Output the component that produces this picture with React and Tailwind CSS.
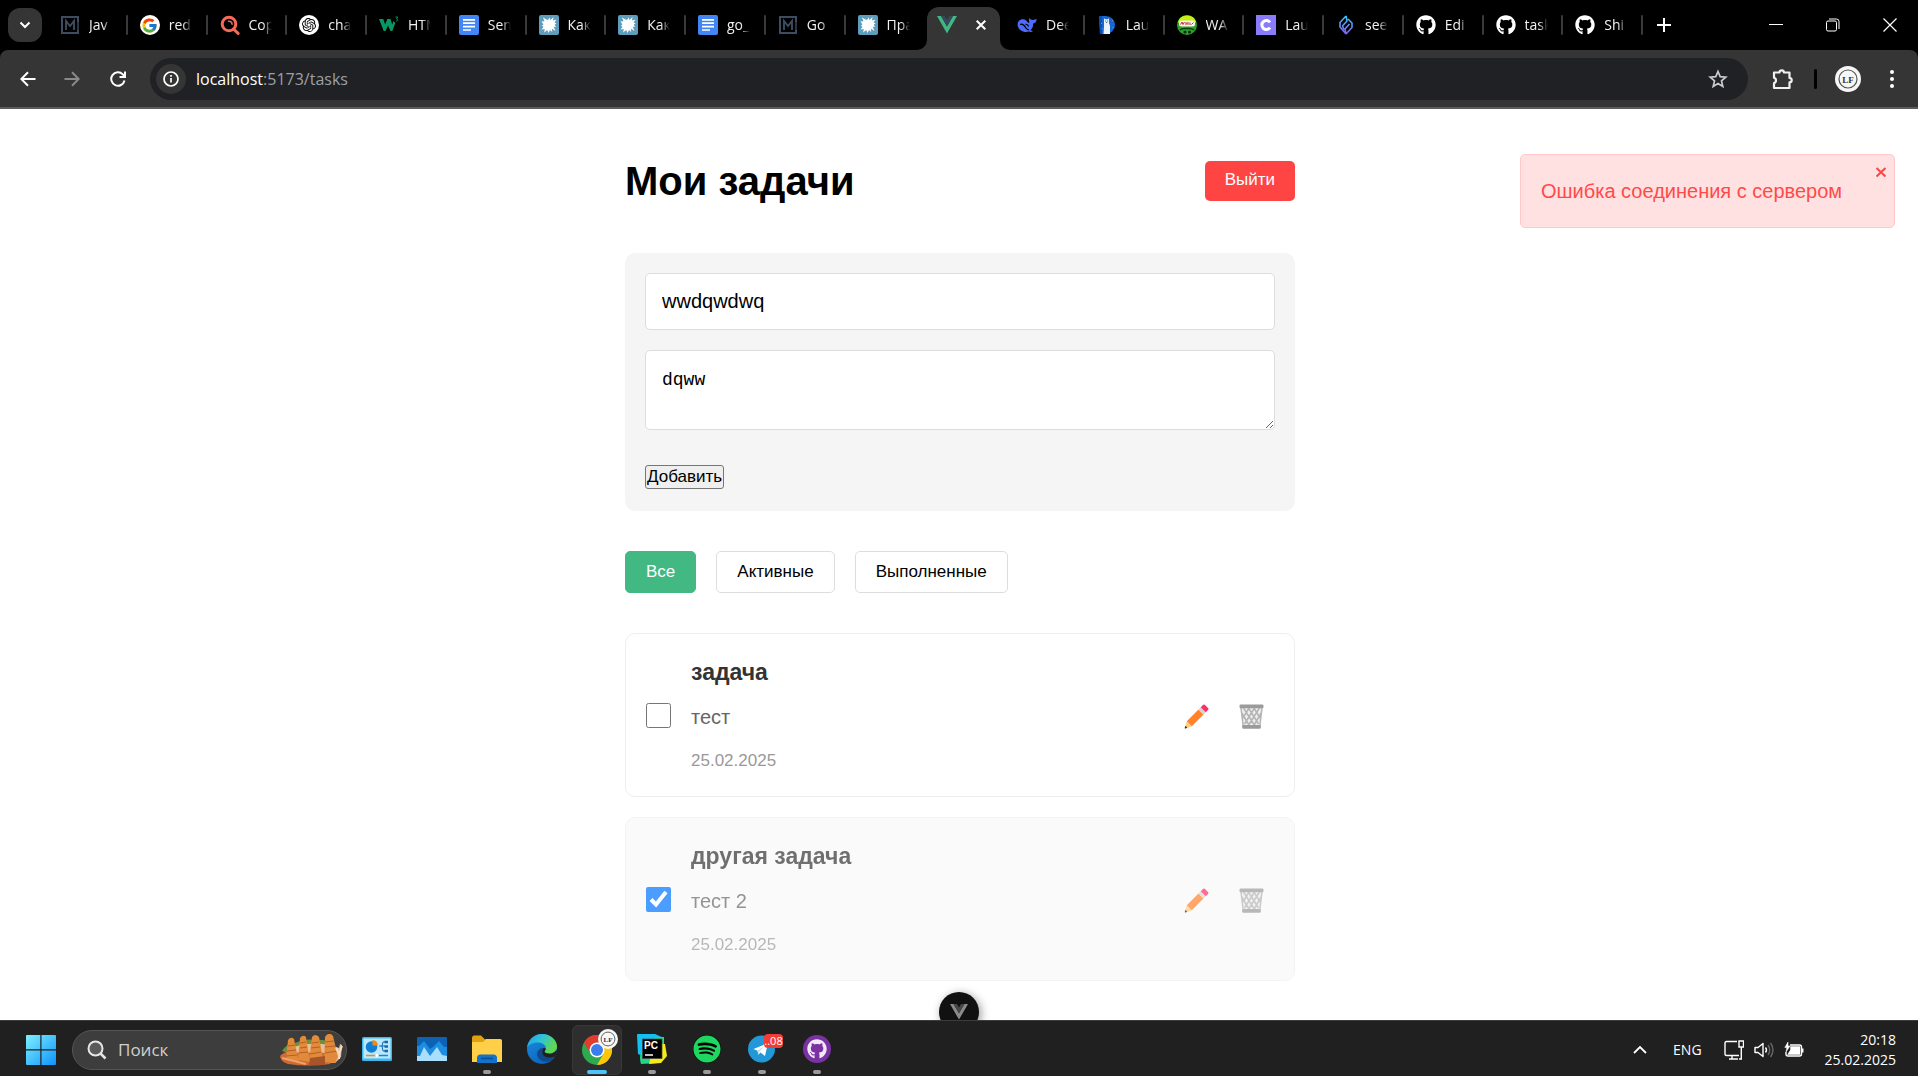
import React, { useState } from "react";
import { FaGithub, FaSpotify } from "react-icons/fa";
import { FcGoogle } from "react-icons/fc";
import { SiOpenai } from "react-icons/si";

/* ---------- tab favicons ---------- */

function MetanitIcon() {
  return (
    <svg viewBox="0 0 18 18" className="size-[18px]" fill="none" stroke="#3d4c5e">
      <path d="M17 6V1H1v16h16v-3" strokeWidth="2" />
      <path d="M5 14V5l4 5 4-5v9" strokeWidth="1.9" />
      <path d="M17 5v9" strokeWidth="1.4" />
    </svg>
  );
}

function GoogleIcon() {
  return (
    <span className="flex size-5 items-center justify-center rounded-full bg-white">
      <FcGoogle className="size-[17px]" />
    </span>
  );
}

function SearchRedIcon() {
  return (
    <svg viewBox="0 0 20 20" className="size-5" fill="none" stroke="#f26b5b" strokeLinecap="round">
      <circle cx="9" cy="9" r="6.8" strokeWidth="3" />
      <path d="M8.5 6.2a3 3 0 0 1 3.6 3" strokeWidth="1.5" />
      <path d="M13.5 14l4.6 4.4" strokeWidth="3" />
    </svg>
  );
}

function GptIcon() {
  return (
    <span className="flex size-5 items-center justify-center rounded-full bg-white">
      <SiOpenai className="size-[14px] text-black" />
    </span>
  );
}

function W3Icon() {
  return (
    <svg viewBox="0 0 20 20" className="size-5">
      <path d="M0 4h4.200l2 5.500L8.300 4h3.200l1.700 5.500L14.500 6l1.800 2-3 8h-1.800L9 10.500 6.500 16H4.700z" fill="#059862" />
      <path d="M16.500 2h2.200l-1.200 1.800c1.800 0 1.600 2.400-.4 2.200" stroke="#059862" strokeWidth="1" fill="none" />
    </svg>
  );
}

function DocsIcon() {
  return (
    <svg viewBox="0 0 20 20" className="size-5">
      <rect width="20" height="20" rx="2" fill="#4285f4" />
      <path d="M4 4.800h12M4 8.200h12M4 11.600h12M4 15h8" stroke="#fff" strokeWidth="1.700" />
    </svg>
  );
}

function SplatIcon() {
  return (
    <svg viewBox="0 0 20 20" className="size-5">
      <rect width="20" height="20" rx="2" fill="#5e9dbc" />
      <path
        d="M9 5l1.500-2.500L11.500 5l3-3-.5 3.500 3.500-1-2 3 2 .8-1.800 1.500 1.300 2.200-2.300-.2 1.800 4.200-3.500-2.300.2 3.300-2.200-2-1.500 3-1.300-3-3 2.500.5-3.500-3.200.5 2-2.500-1.500-1.500 1.500-1L2.500 6.500l3-.3L4 2.500l3 1.800z"
        fill="#fff"
      />
    </svg>
  );
}

function VueIcon() {
  return (
    <svg viewBox="0 0 20 18" className="h-[18px] w-5">
      <path d="M0 0h4l6 10.4L16 0h4L10 17.400z" fill="#41b883" />
      <path d="M4 0h3.700L10 4l2.300-4H16l-6 10.400z" fill="#35495e" />
    </svg>
  );
}

function WhaleIcon() {
  return (
    <svg viewBox="0 0 20 20" className="size-5">
      <path
        d="M.6 9.200C.8 6 3.200 4.200 6 4.200c2.700 0 3.300 1.600 5 3.400.9.900 1.300.3 1.200-.8-.1-1.400-.5-2.300.3-3.700.9 1.500 2 2 3.600 1.900 1.400 0 2.300-.8 3.600-1-.2 2.800-1.500 4.300-3.500 4.500.2 3-1 5.200-2.800 6.700 1 .4 1.900.7 2.600 1.100-1.400.9-3 .7-4.300.2-2.400.9-5.800.5-8-1.300C1.500 13.600.5 11.600.6 9.200z"
        fill="#4d6bfe"
      />
      <path d="M3 9.500c2-1 4.500 1 6 3.500 1 1.500 2 2 3 1.600" stroke="#000" strokeWidth="1.200" fill="none" />
      <path d="M8.500 9.300c1.500-.2 2.700.8 3 2.200" stroke="#000" strokeWidth="1.200" fill="none" />
    </svg>
  );
}

function BearIcon() {
  return (
    <svg viewBox="0 0 20 20" className="size-5">
      <path d="M2 1h7a9 9 0 0 1 0 18H3z" fill="#1767d2" />
      <path d="M2 1h3v18H3z" fill="#0b4fb3" />
      <path d="M7 7V3.500l1.500.8h2L12 3.500V8l1 3v8H6.500l.5-7z" fill="#eaf4ff" />
      <path d="M8.300 6h.8M10.300 6h.8M9.200 7.500h1" stroke="#234" strokeWidth=".9" />
      <path d="M15 5l.5.500M4 8l.5.500M15.500 12l.5.500M4.500 13l.5.500" stroke="#b9dcff" strokeWidth="1" />
    </svg>
  );
}

function MaskIcon() {
  return (
    <svg viewBox="0 0 20 20" className="size-5">
      <circle cx="10" cy="10" r="10" fill="#2ea32b" />
      <path d="M.6 7.500a9.800 9.800 0 0 1 18.800 0z" fill="#c7f010" />
      <rect x="2" y="5.500" width="16" height="6" rx="2.500" fill="#f6f2f0" />
      <path d="M3.500 9.500L5 7l1 2.500L7.500 7M9 10V7.500l2 2V7M13 10V7.500M14.500 9.500l2-2" stroke="#c22c33" strokeWidth="1" fill="none" />
      <path d="M3 15c2-2 4-1.500 7-1.500s5-.5 7 1.500" stroke="#0b3f0e" strokeWidth="1.600" fill="none" />
      <circle cx="8" cy="17" r="1.600" fill="#062c08" />
      <circle cx="12.500" cy="17" r="1.600" fill="#062c08" />
    </svg>
  );
}

function CodeCIcon() {
  return (
    <svg viewBox="0 0 20 20" className="size-5">
      <rect width="20" height="20" fill="#8a7bfa" />
      <path d="M14 7.300a4.500 4.500 0 1 0 0 5.400" stroke="#fff" strokeWidth="3" fill="none" />
    </svg>
  );
}

function SeeIcon() {
  return (
    <svg viewBox="0 0 20 20" className="size-5" fill="none" strokeWidth="1.600" strokeLinejoin="round">
      <defs>
        <linearGradient id="see" x1="0" y1="0" x2="0" y2="1">
          <stop offset="0" stopColor="#35c8f5" />
          <stop offset="1" stopColor="#8a5cf6" />
        </linearGradient>
      </defs>
      <path d="M10 1L4 7.500v4.500l6 7M10 1l1 5-4.500 5 1.500 3.500M10 19l6-6.500V8l-4-4M10 19l-1-5 4.500-5" stroke="url(#see)" />
    </svg>
  );
}

function GitIcon() {
  return <FaGithub className="size-5 text-white" />;
}

const TABS_LEFT = [
  ["Jav", MetanitIcon],
  ["red", GoogleIcon],
  ["Cop", SearchRedIcon],
  ["cha", GptIcon],
  ["HTM", W3Icon],
  ["Sen", DocsIcon],
  ["Как", SplatIcon],
  ["Как", SplatIcon],
  ["go_", DocsIcon],
  ["Go", MetanitIcon],
  ["Пра", SplatIcon],
];

const TABS_RIGHT = [
  ["Dee", WhaleIcon],
  ["Lau", BearIcon],
  ["WA", MaskIcon],
  ["Lau", CodeCIcon],
  ["see", SeeIcon],
  ["Edi", GitIcon],
  ["task", GitIcon],
  ["Shi", GitIcon],
];

function Tab({ label, Icon, divider = true }) {
  return (
    <button type="button" className="flex h-[34px] min-w-0 flex-1 items-center text-left">
      <span className="ml-3 flex size-5 shrink-0 items-center justify-center">
        <Icon />
      </span>
      <span className="ml-[9px] w-[23px] shrink-0 overflow-hidden whitespace-nowrap text-[14px] leading-5 text-[#f2f2f2] [mask-image:linear-gradient(to_right,#000_60%,transparent)]">
        {label}
      </span>
      <span className={divider ? "ml-auto h-5 w-[2px] rounded bg-[#3a3a3a]" : "hidden"} />
    </button>
  );
}

function TabStrip() {
  return (
    <div className="flex h-[50px] items-center bg-black pl-2">
      <button
        type="button"
        aria-label="Поиск вкладок"
        className="flex size-[34px] items-center justify-center rounded-xl bg-[#353535]"
      >
        <svg viewBox="0 0 12 12" className="size-3" fill="none" stroke="#fff" strokeWidth="2">
          <path d="M1.500 3.500L6 8l4.500-4.500" />
        </svg>
      </button>
      <div className="ml-[6px] flex max-w-[1595px] flex-1 items-center">
        {TABS_LEFT.map(([label, Icon], i) => (
          <Tab key={i} label={label} Icon={Icon} divider={i < 10} />
        ))}
        <div className="flex h-[50px] min-w-0 flex-1 items-end">
          <svg viewBox="0 0 10 10" className="-ml-2 size-[10px] shrink-0">
            <path d="M10 0v10H0A10 10 0 0 0 10 0z" fill="#353535" />
          </svg>
          <div className="flex h-[43px] flex-1 items-center justify-between rounded-t-xl bg-[#353535] pr-[14px] pb-2 pl-[10px]">
            <VueIcon />
            <button type="button" aria-label="Закрыть вкладку">
              <svg viewBox="0 0 10 10" className="size-[10px]" stroke="#fff" strokeWidth="2">
                <path d="M.7.7l8.600 8.600M9.300.7L.7 9.300" />
              </svg>
            </button>
          </div>
          <svg viewBox="0 0 10 10" className="-mr-[5px] size-[10px] shrink-0">
            <path d="M0 0v10h10A10 10 0 0 1 0 0z" fill="#353535" />
          </svg>
        </div>
        {TABS_RIGHT.map(([label, Icon], i) => (
          <Tab key={i} label={label} Icon={Icon} />
        ))}
      </div>
      <button type="button" aria-label="Новая вкладка" className="ml-[14px]">
        <svg viewBox="0 0 14 14" className="size-[14px]" stroke="#fff" strokeWidth="2">
          <path d="M7 0v14M0 7h14" />
        </svg>
      </button>
      <div className="ml-auto flex">
        <button type="button" aria-label="Свернуть" className="flex h-12 w-[57px] items-center justify-center">
          <svg viewBox="0 0 14 14" className="size-[14px]" stroke="#fff" strokeWidth="1">
            <path d="M0 6.500h14" />
          </svg>
        </button>
        <button type="button" aria-label="Развернуть" className="flex h-12 w-[57px] items-center justify-center">
          <svg viewBox="0 0 14 14" className="size-[14px]" fill="none" stroke="#fff">
            <rect x=".5" y="3" width="10" height="10" rx="1.500" />
            <path d="M3 1h7.500a2.500 2.500 0 0 1 2.500 2.500V11" />
          </svg>
        </button>
        <button type="button" aria-label="Закрыть" className="flex h-12 w-[57px] items-center justify-center">
          <svg viewBox="0 0 14 14" className="size-[14px]" stroke="#fff" strokeWidth="1.200">
            <path d="M.5.500l13 13M13.500.500l-13 13" />
          </svg>
        </button>
      </div>
    </div>
  );
}

function LfAvatar({ className }) {
  return (
    <svg viewBox="0 0 26 26" className={className}>
      <circle cx="13" cy="13" r="13" fill="#f7f7f7" />
      <circle cx="13" cy="13" r="9" fill="none" stroke="#555" strokeWidth="1.200" />
      <text x="13" y="16.500" textAnchor="middle" fontSize="9" fontWeight="700" fontFamily="Liberation Serif, serif" fill="#333">
        LF
      </text>
    </svg>
  );
}

function Toolbar() {
  return (
    <div className="bg-black">
      <div className="flex h-[59px] items-center rounded-t-lg border-b-2 border-[#5c5c5c] bg-[#353535] pr-[17px] pl-[13px]">
        <button type="button" aria-label="Назад" className="flex h-8 w-[30px] items-center justify-center">
          <svg viewBox="0 0 16 16" className="size-4" fill="none" stroke="#fff" strokeWidth="2">
            <path d="M15.500 8H1.500M8 1.300L1.300 8 8 14.700" />
          </svg>
        </button>
        <button type="button" aria-label="Вперёд" className="ml-[14px] flex h-8 w-[30px] items-center justify-center">
          <svg viewBox="0 0 16 16" className="size-4" fill="none" stroke="#8a8a8a" strokeWidth="2">
            <path d="M.5 8h14M8 1.300L14.700 8 8 14.700" />
          </svg>
        </button>
        <button type="button" aria-label="Обновить" className="ml-4 flex h-8 w-[30px] items-center justify-center">
          <svg viewBox="0 0 16 16" className="size-4" fill="none" stroke="#fff" strokeWidth="2">
            <path d="M14.500 9.500A6.700 6.700 0 1 1 12.800 3.400L14.500 5.200" />
            <path d="M15 .5v5.500H9.500" />
          </svg>
        </button>
        <div className="ml-[17px] flex h-[42px] flex-1 items-center rounded-full bg-[#202124] pr-5 pl-[6px]">
          <button
            type="button"
            aria-label="Сведения о сайте"
            className="flex size-[30px] items-center justify-center rounded-full bg-[#353535]"
          >
            <svg viewBox="0 0 16 16" className="size-4" fill="none" stroke="#fff" strokeWidth="1.700">
              <circle cx="8" cy="8" r="7" />
              <path d="M8 7v4.500M8 4v1.700" />
            </svg>
          </button>
          <span className="ml-[10px] flex-1 text-[16px] leading-6 text-[#9aa0a6]">
            <span className="text-white">localhost</span>:5173/tasks
          </span>
          <button type="button" aria-label="Добавить в закладки">
            <svg viewBox="0 0 20 20" className="size-5" fill="none" stroke="#c9cbcd" strokeWidth="1.700" strokeLinejoin="miter">
              <path d="M10 2.500l2.200 5.200 5.600.5-4.300 3.700 1.300 5.500-4.800-2.900-4.800 2.900 1.300-5.500-4.300-3.700 5.600-.5z" />
            </svg>
          </button>
        </div>
        <button type="button" aria-label="Расширения" className="ml-6">
          <svg viewBox="0 0 22 22" className="size-[22px]" fill="none" stroke="#f1f1f1" strokeWidth="2.200" strokeLinejoin="round">
            <path d="M2 4.500h5.500a2.200 2.200 0 0 1 4.400 0H17.500V10a2.200 2.200 0 0 1 0 4.400V20H2v-5a2.700 2.700 0 0 0 0-5.200z" />
          </svg>
        </button>
        <span className="ml-5 h-5 w-[3px] rounded bg-black" />
        <button type="button" aria-label="Профиль" className="ml-[18px]">
          <LfAvatar className="size-[26px]" />
        </button>
        <button type="button" aria-label="Меню" className="ml-[22px] flex w-[18px] justify-center">
          <svg viewBox="0 0 4 18" className="h-[18px] w-1" fill="#fff">
            <circle cx="2" cy="2" r="2" />
            <circle cx="2" cy="9" r="2" />
            <circle cx="2" cy="16" r="2" />
          </svg>
        </button>
      </div>
    </div>
  );
}

/* ---------- task page ---------- */

function PencilEmoji() {
  return (
    <svg viewBox="0 0 25 25" className="size-[25px]">
      <path d="M2.800 17.200l5 5L1.600 24.500q-1 .3-.8-.7z" fill="#ffce7c" />
      <path d="M1.300 21.700l2 2-1.700.8q-1 .3-.8-.7z" fill="#402a32" />
      <path d="M2.800 17.200L14.500 5.500l5 5L7.800 22.200z" fill="#ff822d" />
      <path d="M14.500 5.500l2.200-2.200 5 5-2.200 2.200z" fill="#d3d3d3" />
      <path d="M16.700 3.300L19 1q1-1 2 0l3 3q1 1 0 2l-2.300 2.300z" fill="#fc2f68" />
    </svg>
  );
}

function TrashEmoji() {
  return (
    <svg viewBox="0 0 25 25" className="size-[25px]" fill="none">
      <path d="M1.500 3h22l-2.300 20H3.800z" fill="#e2e2e2" fillOpacity=".6" />
      <path
        d="M2 4l2.200 18M23 4l-2.200 18M4.500 4l11.500 18M9.500 4l10 16M15 4l6 10M2.800 9L10.500 22M20.500 4L9 22M15.500 4L5.500 20M10 4L4 14M22.200 9L14.500 22"
        stroke="#b4b4b4"
        strokeWidth="1.500"
      />
      <rect x=".5" y=".5" width="24" height="3.700" rx="1.200" fill="#9b9b9b" />
      <rect x="3.200" y="21" width="18.600" height="3.700" rx="1.200" fill="#9b9b9b" />
    </svg>
  );
}

const TASKS = [
  { id: 1, title: "задача", text: "тест", date: "25.02.2025", done: false },
  { id: 2, title: "другая задача", text: "тест 2", date: "25.02.2025", done: true },
];

function TaskCard({ task }) {
  const [done, setDone] = useState(task.done);
  return (
    <li
      className={
        done
          ? "flex items-center gap-5 rounded-[10px] border border-[#eee] bg-[#f9f9f9] p-5 opacity-70"
          : "flex items-center gap-5 rounded-[10px] border border-[#eee] bg-white p-5"
      }
    >
      <input
        type="checkbox"
        aria-label={task.title}
        checked={done}
        onChange={(e) => setDone(e.target.checked)}
        className="size-[25px]"
      />
      <div className="flex-1">
        <h3 className="text-[23px] leading-9 font-bold text-[#333]">{task.title}</h3>
        <p className="mt-3 text-[20px] leading-[30px] text-[#666]">{task.text}</p>
        <p className="mt-[14px] text-[17px] leading-[30px] text-[#999]">{task.date}</p>
      </div>
      <div className="flex gap-[10px] pt-[3px]">
        <button type="button" aria-label="Редактировать" className="flex w-[45px] justify-center">
          <PencilEmoji />
        </button>
        <button type="button" aria-label="Удалить" className="flex w-[45px] justify-center">
          <TrashEmoji />
        </button>
      </div>
    </li>
  );
}

function TasksPage() {
  return (
    <main className="relative flex-1 overflow-hidden bg-white pt-10 pl-0.5 font-['Liberation_Sans',Arial,sans-serif] text-black">
      <div className="mx-auto w-full max-w-[670px]">
        <header className="flex items-center justify-between">
          <h1 className="text-[40px] leading-[64px] font-bold">Мои задачи</h1>
          <button type="button" className="h-10 rounded-[5px] bg-[#ff4444] px-5 pb-0.5 text-[17px] text-white">
            Выйти
          </button>
        </header>

        <form className="mt-10 rounded-[10px] bg-[#f5f5f5] px-5 pt-5 pb-[22px]" onSubmit={(e) => e.preventDefault()}>
          <input
            type="text"
            aria-label="Название задачи"
            defaultValue="wwdqwdwq"
            className="block h-[57px] w-full rounded-[5px] border border-[#ddd] bg-white px-4 text-[20px]"
          />
          <textarea
            aria-label="Описание задачи"
            defaultValue="dqww"
            className="mt-5 block h-20 w-full resize-y rounded-[5px] border border-[#ddd] bg-white px-4 py-4 font-['Liberation_Mono',monospace] text-[18px] leading-[26px]"
          />
          <button
            type="submit"
            className="mt-[35px] block h-6 rounded-[3px] border border-[#767676] bg-[#efefef] px-px text-[17px] leading-5"
          >
            Добавить
          </button>
        </form>

        <div className="mt-10 flex gap-5">
          <button type="button" className="h-[42px] rounded-[5px] border border-[#42b883] bg-[#42b883] px-5 text-[17px] text-white">
            Все
          </button>
          <button type="button" className="h-[42px] rounded-[5px] border border-[#ddd] bg-white px-5 text-[17px]">
            Активные
          </button>
          <button type="button" className="h-[42px] rounded-[5px] border border-[#ddd] bg-white px-5 text-[17px]">
            Выполненные
          </button>
        </div>

        <ul className="mt-10 flex flex-col gap-5">
          {TASKS.map((task) => (
            <TaskCard key={task.id} task={task} />
          ))}
        </ul>
      </div>

      <div
        role="alert"
        className="absolute top-[45px] right-[23px] flex h-[74px] w-[375px] rounded-[5px] border border-[#ffc9c9] bg-[#ffe1e1] pl-5 text-[#ff4a4a]"
      >
        <p className="flex-1 text-[20px] leading-[72px] whitespace-nowrap">Ошибка соединения с сервером</p>
        <button type="button" aria-label="Закрыть уведомление" className="mt-[11px] mr-[7px] h-3">
          <svg viewBox="0 0 12 12" className="size-3" stroke="#ff4444" strokeWidth="2">
            <path d="M1.500 2l9 8.500M10.500 2l-9 8.500" />
          </svg>
        </button>
      </div>

      <button
        type="button"
        aria-label="Vue DevTools"
        className="absolute -bottom-3 left-1/2 flex size-10 -translate-x-1/2 items-start justify-center rounded-full bg-[#111] pt-3 shadow-[2px_2px_10px_rgba(0,0,0,0.4)]"
      >
        <svg viewBox="0 0 18 16" className="h-4 w-[18px]">
          <path d="M0 0h3.600L9 9.300 14.400 0H18L9 15.600z" fill="#8a8a8a" />
          <path d="M3.600 0H7l2 3.600L11 0h3.400L9 9.300z" fill="#484848" />
        </svg>
      </button>
    </main>
  );
}

/* ---------- taskbar ---------- */

function StartIcon() {
  return (
    <svg viewBox="0 0 30 30" className="size-[30px]">
      <defs>
        <linearGradient id="win" x1="0" y1="0" x2="1" y2="1">
          <stop offset="0" stopColor="#7df0ff" />
          <stop offset="1" stopColor="#0f93fb" />
        </linearGradient>
      </defs>
      <path d="M1 0h13.300v14.300H0V1q0-1 1-1zM15.500 0H29q1 0 1 1v13.300H15.500zM0 15.500h14.300V30H1q-1 0-1-1zM15.500 15.500H30V29q0 1-1 1H15.500z" fill="url(#win)" />
    </svg>
  );
}

function CappadociaArt() {
  return (
    <svg viewBox="0 0 64 32" className="h-8 w-16">
      <path d="M3 17q6-9 13-8 12-5 20-3 12-1 14 4l-2 8H6z" fill="#6f8f3c" />
      <path d="M10 15q16-8 42-4l8 3 1-4 2 1-1 12-6 6H10z" fill="#e8bf98" />
      <path d="M1 22q6-6 12-4l10 1 12-1 12 1 10 3-6 8q-22 3-42 0-8-3-8-8z" fill="#cf6a30" />
      <path d="M7 25l2-19q3-4 6-1l5 24zM19 26l2-22q3-4 6-1l4 25zM30 27l3-24q3-4 7 0l5 27zM45 28l1-25q4-6 8-1l5 21-3 6z" fill="#e08a3a" />
      <path d="M9 12l7-1M8 17l9-1M7 22l11-1M21 9l6-1M21 14l7-1M20 19l9-1M33 9l7-1M32 14l9-1M31 20l11-2M46 8l9-1M46 13l10-1M46 19l12-2" stroke="#b4602a" strokeWidth="1" />
      <path d="M31 24l15-2v9H30z" fill="#a8542a" />
      <path d="M3 24q12 3 24 6" stroke="#f0a070" strokeWidth="2" fill="none" />
      <path d="M57 14l3 6 3-8M60 20v5" stroke="#f3dcc6" strokeWidth="2" fill="none" />
    </svg>
  );
}

function ControlPanelIcon() {
  return (
    <svg viewBox="0 0 30 24" className="h-6 w-[30px]">
      <rect width="30" height="24" rx="1.500" fill="#3db8f0" />
      <rect x="1.500" y="1.500" width="27" height="20" fill="#b9e9fb" />
      <circle cx="9.500" cy="10" r="5.800" fill="#0f7fd6" />
      <path d="M10.500 8.500V3a6 6 0 0 1 5.500 5.500z" fill="#f28a10" />
      <path d="M17 9h3l1-4h2M20 9h3M20 9l1 5h2" stroke="#1767ad" strokeWidth="1" fill="none" />
      <path d="M22.500 5h3.500M22.500 9.500h3.500M22.500 14h3.500" stroke="#1767ad" strokeWidth="2.600" />
      <path d="M4 18.500h11" stroke="#f28a10" strokeWidth="1.500" />
      <path d="M15 18.500h11" stroke="#1784d8" strokeWidth="1.500" />
      <circle cx="15" cy="18.500" r="1.700" fill="#fff" />
    </svg>
  );
}

function MonitorIcon() {
  return (
    <svg viewBox="0 0 30 24" className="h-6 w-[30px]">
      <rect width="30" height="24" rx="1" fill="#0c63b4" />
      <path d="M0 9h2l5-5 6 8 3-2 6-6 5 6h3v14H0z" fill="#1c8de0" />
      <path d="M0 19h3l4-9 6 9 7-9 5 8 5 1v5H0z" fill="#a9dffc" />
    </svg>
  );
}

function FolderIcon() {
  return (
    <svg viewBox="0 0 30 28" className="h-7 w-[30px]">
      <path d="M0 3q0-2.500 2-2.500h7l4 4h15q2 0 2 2V12H0z" fill="#e0a10c" />
      <path d="M0 7h11l3-3h14q2 0 2 2v21H0z" fill="#ffcf48" />
      <path d="M5 28v-5q0-3.500 3.500-3.500h13q3.500 0 3.500 3.500v5z" fill="#1173c9" />
      <path d="M9 23.500h12" stroke="#0a4f91" strokeWidth="1.500" />
    </svg>
  );
}

function EdgeIcon() {
  return (
    <svg viewBox="0 0 30 30" className="size-[30px]">
      <defs>
        <linearGradient id="edgeTop" x1="0" y1="0" x2="1" y2=".4">
          <stop offset="0" stopColor="#1f9fe8" />
          <stop offset=".5" stopColor="#2fc3d8" />
          <stop offset="1" stopColor="#62d84e" />
        </linearGradient>
        <linearGradient id="edgeBody" x1="0" y1="0" x2=".6" y2="1">
          <stop offset="0" stopColor="#1a8fe0" />
          <stop offset="1" stopColor="#0d62bd" />
        </linearGradient>
      </defs>
      <circle cx="15" cy="15" r="15" fill="url(#edgeBody)" />
      <path d="M10 20c0 5 6 8.500 11 7.500 3-.6 5-2 6.500-4 .5-.7-.2-1-.8-.7-4 2-9 .8-11-2.300-1.500-2.500-.8-5 .5-6.500-3 0-6.200 2.500-6.200 6z" fill="#11498f" />
      <path d="M0 14C1 5.500 7.500 0 15 0c8.500 0 15 6 15 12.500 0 4.500-3.500 7-7.500 7-3 0-5-1-5-2 0-.8 1.300-1.400 1.300-3.500C18.800 11 15.500 8.500 11 8.500 5 8.500 1 11 0 14z" fill="url(#edgeTop)" />
      <path d="M17.500 17.500c0 1.200 2 2.200 5 2.200 3.300 0 6-1.700 7-4.200.6 3-.2 5.500-2 7.500-.5.400-.5 0-.8-.2-4 2-9 .8-11-2.300-1-2-.8-4 .3-6 1.700-1 3 .2 2.800 1-.2.700-1.300 1.200-1.300 2z" fill="#202020" />
    </svg>
  );
}

function ChromeIcon() {
  return (
    <svg viewBox="0 0 30 30" className="size-[30px]">
      <circle cx="15" cy="15" r="15" fill="#2da94f" />
      <path d="M28 7.500A15 15 0 0 1 15 30l6.500-11.200L15 7.500z" fill="#fdc60a" />
      <path d="M15 7.500h13a15 15 0 0 0-26 0l6.500 11.200z" fill="#e33b2e" />
      <circle cx="15" cy="15" r="7.500" fill="#fff" />
      <circle cx="15" cy="15" r="6" fill="#3b7ded" />
    </svg>
  );
}

function PyCharmIcon() {
  return (
    <svg viewBox="0 0 30 30" className="size-[30px]">
      <path d="M0 1q0-1 1-1h17l9 4v8L6 22 1 20z" fill="#13c0f2" />
      <path d="M18 3h9v9H14z" fill="#1fd98c" />
      <path d="M4 18h16v11l-16 1q-2-6 0-12z" fill="#20d789" />
      <path d="M24 10h4l2 12-6 7-12 1 2-8z" fill="#f5ea1a" />
      <rect x="5.500" y="5" width="19.500" height="19.500" fill="#000" stroke="#444" strokeWidth=".7" />
      <text x="7" y="15" fontSize="10" fontWeight="700" fontFamily="Liberation Sans, sans-serif" fill="#fff">
        PC
      </text>
      <path d="M8 21h8" stroke="#fff" strokeWidth="1.500" />
    </svg>
  );
}

function SpotifyIcon() {
  return (
    <span className="flex size-[28px] items-center justify-center rounded-full bg-black">
      <FaSpotify className="size-[28px] text-[#1ed760]" />
    </span>
  );
}

function TelegramIcon() {
  return (
    <span className="relative flex size-[28px]">
      <svg viewBox="0 0 28 28" className="size-[28px]">
        <circle cx="13.500" cy="14" r="13.500" fill="#2298d6" />
        <path d="M5.500 14L20 8l-3 13-4.500-3.500-2.300 2.300-.6-4z" fill="#fff" />
        <path d="M9.600 15.800L16.500 11l-5 5.500-1.300 3.300z" fill="#b9dcf0" />
      </svg>
      <span className="absolute -top-px left-4 h-[14px] w-[19px] rounded bg-[#f23c34] text-center text-[11px] leading-[14px] text-white">
        ..08
      </span>
    </span>
  );
}

function GithubDesktopIcon() {
  return (
    <span className="flex size-[28px] items-center justify-center rounded-full bg-[#7a32a3]">
      <FaGithub className="size-5 text-[#f1eaf5]" />
    </span>
  );
}

const APPS = [
  { name: "Панель управления", Icon: ControlPanelIcon },
  { name: "Монитор", Icon: MonitorIcon },
  { name: "Проводник", Icon: FolderIcon, running: true },
  { name: "Edge", Icon: EdgeIcon },
  { name: "Chrome", Icon: ChromeIcon, active: true },
  { name: "PyCharm", Icon: PyCharmIcon, running: true },
  { name: "Spotify", Icon: SpotifyIcon, running: true },
  { name: "Telegram", Icon: TelegramIcon, running: true },
  { name: "GitHub Desktop", Icon: GithubDesktopIcon, running: true },
];

function TaskbarApp({ name, Icon, running, active }) {
  return (
    <button
      type="button"
      aria-label={name}
      className={
        active
          ? "relative flex h-[50px] w-[50px] flex-col items-center rounded-md border border-[#383838] bg-[#2e2e2e]"
          : "relative flex h-[50px] w-[50px] flex-col items-center"
      }
    >
      <span className="flex h-[45px] items-center pt-1">
        <Icon />
      </span>
      {running && <span className="h-1 w-2 rounded-full bg-[#9a9a9a]" />}
      {active && <span className="h-1 w-5 rounded-full bg-[#4cc2ff]" />}
      {active && <LfAvatar className="absolute top-[3px] right-[3px] size-5" />}
    </button>
  );
}

function Taskbar() {
  return (
    <footer className="flex h-14 items-center border-t border-[#3c3c3c] bg-[#202020] pt-0.5 pr-[22px] pl-[26px] text-white">
      <button type="button" aria-label="Пуск">
        <StartIcon />
      </button>
      <label className="ml-4 flex h-10 w-[275px] items-center rounded-full border border-[#555] bg-[#3d3d3d] pr-[3px] pl-[14px]">
        <svg viewBox="0 0 20 20" className="size-5 shrink-0" fill="none" stroke="#e6e6e6" strokeWidth="2">
          <circle cx="8.500" cy="8.500" r="7" fill="#5a5a5a" />
          <path d="M13.500 13.500l5 5" strokeWidth="2.500" />
        </svg>
        <input
          type="text"
          aria-label="Поиск"
          placeholder="Поиск"
          className="ml-[11px] min-w-0 flex-1 bg-transparent text-[17px] placeholder:text-[#d0d0d0]"
        />
        <CappadociaArt />
      </label>
      <div className="ml-[5px] flex gap-[5px]">
        {APPS.map((app) => (
          <TaskbarApp key={app.name} {...app} />
        ))}
      </div>
      <div className="ml-auto flex items-center">
        <button type="button" aria-label="Скрытые значки">
          <svg viewBox="0 0 14 9" className="h-[9px] w-[14px]" fill="none" stroke="#fff" strokeWidth="1.800">
            <path d="M1 8l6-6 6 6" />
          </svg>
        </button>
        <span className="ml-[26px] text-[14px]">ENG</span>
        <svg viewBox="0 0 20 20" className="ml-[22px] size-5" fill="none" stroke="#fff" strokeWidth="1.400">
          <path d="M13 1.500H2.500q-1.500 0-1.500 1.500v11q0 1.500 1.500 1.500H15M8 15.500V19M5 19h9" />
          <path d="M15 1h4.500v6H15zM17.300 7v12H15" />
        </svg>
        <svg viewBox="0 0 20 20" className="ml-[10px] size-5" fill="none" stroke="#fff" strokeWidth="1.400">
          <path d="M1 7.500v5h3l5 4V3.500l-5 4z" strokeLinejoin="round" />
          <path d="M11.500 7.500q2 2.500 0 5" />
          <path d="M14 5q3.500 5 0 10M16.500 3q5 7 0 14" stroke="#666" />
        </svg>
        <svg viewBox="0 0 20 20" className="ml-[10px] size-5" fill="none" stroke="#fff" strokeWidth="1.400">
          <path d="M6 5h9.500q2 0 2 2v7q0 2-2 2H4q-2 0-2-2v-2" />
          <path d="M7 7h8.500v7H4.500l2.500-4z" fill="#fff" />
          <path d="M18.500 8.500v4" strokeWidth="2" />
          <path d="M4 2L.8 7.500h2L2 12l4-6H4z" fill="#fff" strokeWidth=".5" />
        </svg>
        <div className="ml-[21px] text-right text-[14px] leading-5">
          <div>20:18</div>
          <div>25.02.2025</div>
        </div>
      </div>
    </footer>
  );
}

export default function App() {
  return (
    <div className="flex min-h-screen flex-col font-['Open_Sans','Noto_Sans',sans-serif]">
      <TabStrip />
      <Toolbar />
      <TasksPage />
      <Taskbar />
    </div>
  );
}
